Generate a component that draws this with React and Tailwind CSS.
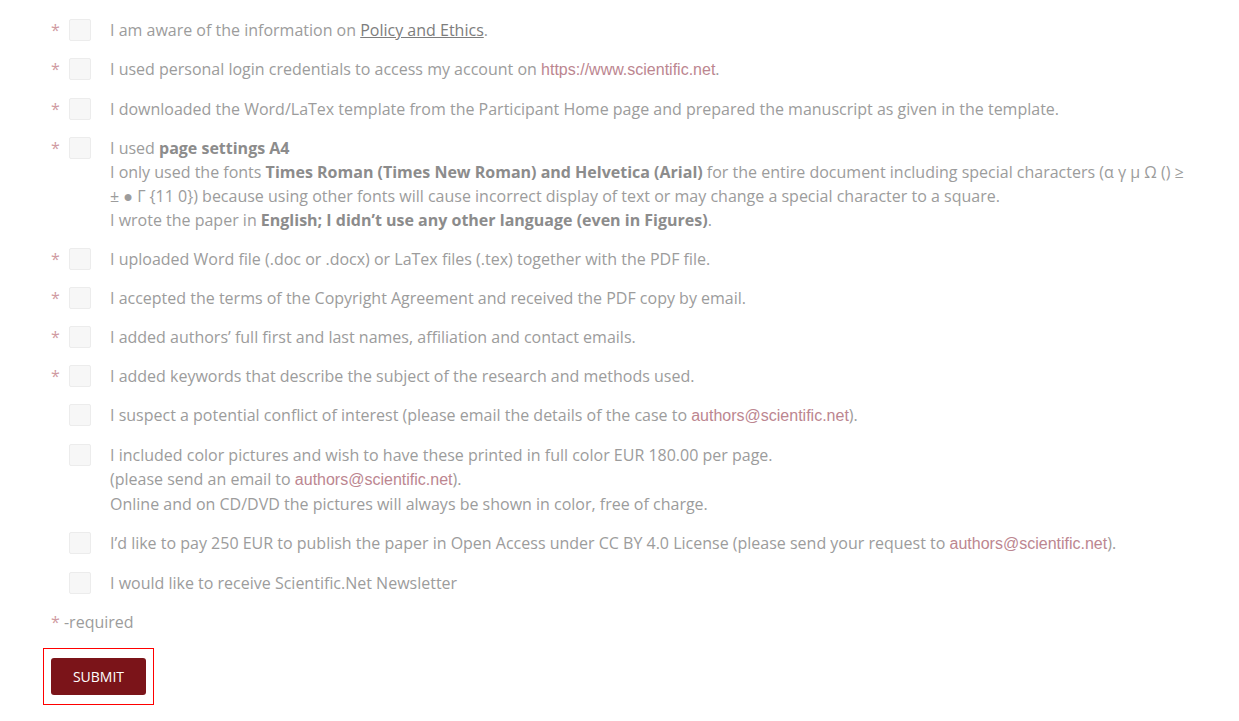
import React from "react";

const Link = ({ children }) => (
  <span className="text-[#bc8690]" style={{ fontFamily: '"Liberation Sans", Arial, sans-serif' }}>{children}</span>
);

const B = ({ children }) => <b className="font-bold text-[#8c8c8c]">{children}</b>;

function Row({ req, children }) {
  return (
    <div className="flex items-start mb-[15px]">
      <span className="w-[18px] shrink-0 text-[#cf9aa2] leading-[24px]">{req ? "*" : ""}</span>
      <span className="w-[22px] h-[22px] mt-[1px] shrink-0 bg-[#f7f7f7] border border-[#ececec] rounded-[2px]"></span>
      <div className="ml-[19px] leading-[24px] max-w-[1080px]">{children}</div>
    </div>
  );
}

export default function App() {
  return (
    <div
      className="bg-white min-h-[721px] pl-[51px] pt-[18px] text-[16px] text-[#9c9c9c]"
      style={{ fontFamily: '"Open Sans", sans-serif' }}
    >
      <Row req>
        I am aware of the information on <span className="underline text-[#7d7d7d]">Policy and Ethics</span>.
      </Row>
      <Row req>
        I used personal login credentials to access my account on <Link>https://www.scientific.net</Link>.
      </Row>
      <Row req>
        I downloaded the Word/LaTex template from the Participant Home page and prepared the manuscript as given in the template.
      </Row>
      <Row req>
        <div>I used <B>page settings A4</B></div>
        <div>
          I only used the fonts <B>Times Roman (Times New Roman) and Helvetica (Arial)</B> for the entire document including special characters (α γ μ Ω () ≥ ± ● Γ {"{11 0}"}) because using other fonts will cause incorrect display of text or may change a special character to a square.
        </div>
        <div>I wrote the paper in <B>English; I didn’t use any other language (even in Figures)</B>.</div>
      </Row>
      <Row req>I uploaded Word file (.doc or .docx) or LaTex files (.tex) together with the PDF file.</Row>
      <Row req>I accepted the terms of the Copyright Agreement and received the PDF copy by email.</Row>
      <Row req>I added authors’ full first and last names, affiliation and contact emails.</Row>
      <Row req>I added keywords that describe the subject of the research and methods used.</Row>
      <Row>
        I suspect a potential conflict of interest (please email the details of the case to <Link>authors@scientific.net</Link>).
      </Row>
      <Row>
        <div>I included color pictures and wish to have these printed in full color EUR 180.00 per page.</div>
        <div>(please send an email to <Link>authors@scientific.net</Link>).</div>
        <div>Online and on CD/DVD the pictures will always be shown in color, free of charge.</div>
      </Row>
      <Row>
        I’d like to pay 250 EUR to publish the paper in Open Access under CC BY 4.0 License (please send your request to <Link>authors@scientific.net</Link>).
      </Row>
      <Row>I would like to receive Scientific.Net Newsletter</Row>
      <div className="leading-[24px]">
        <span className="text-[#cf9aa2]">*</span> -required
      </div>
      <div className="mt-[14px] -ml-[8px] inline-block border border-[#ff0000] px-[7px] py-[9px]">
        <button className="w-[95px] h-[37px] bg-[#7b1419] text-white text-[14px] rounded-[3px] uppercase">
          Submit
        </button>
      </div>
    </div>
  );
}
